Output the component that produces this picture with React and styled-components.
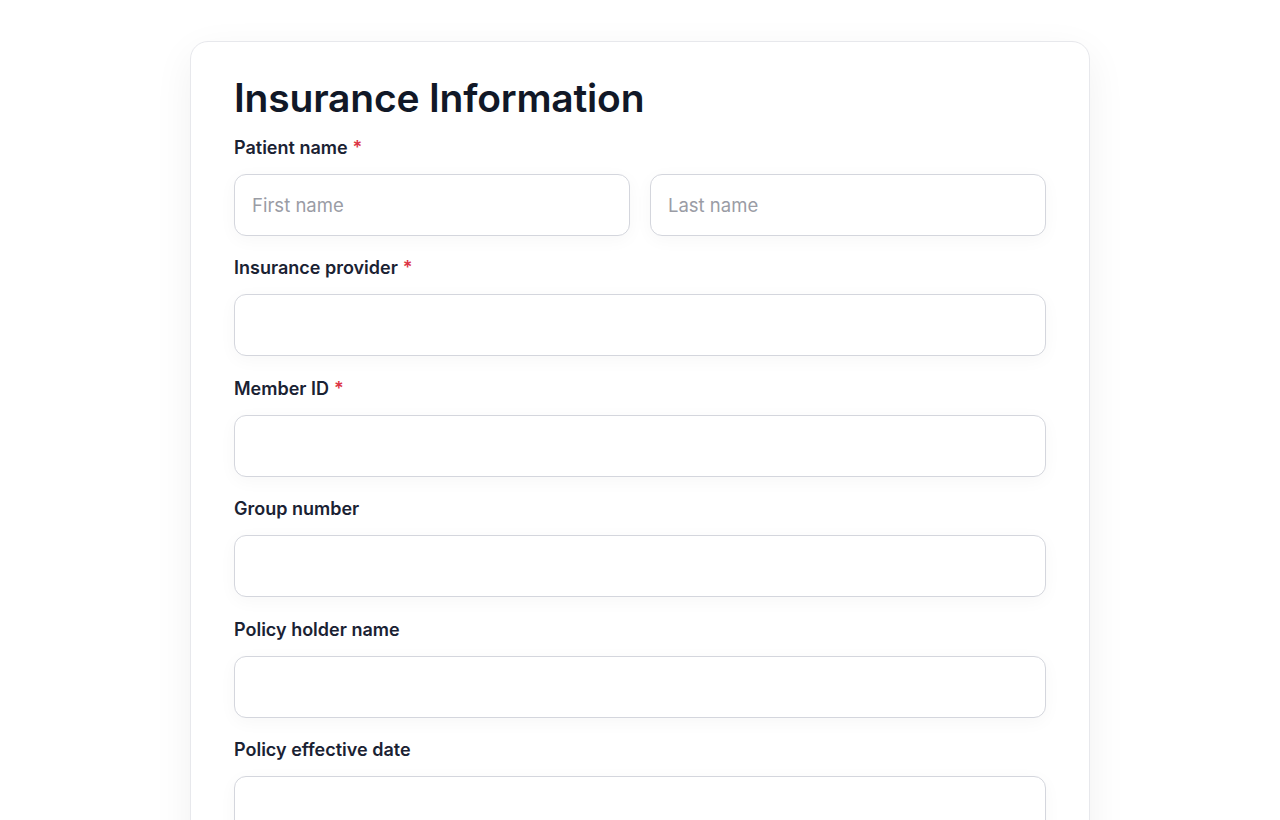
import React from 'react';
import styled, { createGlobalStyle } from 'styled-components';

const GlobalStyle = createGlobalStyle`
  * { box-sizing: border-box; }
  body {
    margin: 0;
    background: #ffffff;
    font-family: 'Inter', 'Noto Sans', sans-serif;
    color: #111827;
  }
`;

const Page = styled.div`
  min-height: 100vh;
  display: flex;
  justify-content: center;
  padding-top: 41px;
`;

const Card = styled.form`
  width: 900px;
  align-self: flex-start;
  background: #fff;
  border: 1px solid #e7e8ec;
  border-radius: 18px;
  padding: 33px 43px 40px;
  box-shadow: 0 12px 40px rgba(17, 24, 39, 0.06);
`;

const Title = styled.h1`
  margin: 0 0 16px;
  font-size: 39px;
  line-height: 46px;
  font-weight: 600;
  letter-spacing: -0.2px;
  color: #111827;
`;

const Field = styled.div`
  display: flex;
  flex-direction: column;
  gap: 16px;
  margin-bottom: 21.4px;
`;

const Label = styled.label`
  font-size: 18px;
  line-height: 21px;
  font-weight: 600;
  color: #1a2233;
`;

const Required = styled.span`
  color: #dc3545;
  margin-left: 5px;
`;

const Row = styled.div`
  display: grid;
  grid-template-columns: ${(p) => `repeat(${p.cols || 1}, 1fr)`};
  gap: 20px;
`;

const Input = styled.input`
  width: 100%;
  height: 62px;
  padding: 0 17px;
  border: 1px solid #d4d6dd;
  border-radius: 12px;
  background: #fff;
  font-family: inherit;
  font-size: 18.5px;
  color: #111827;
  box-shadow: 0 4px 18px rgba(17, 24, 39, 0.035);
  outline: none;

  &::placeholder {
    color: #9a9ca5;
  }
`;

const fields = [
  { label: 'Insurance provider', required: true },
  { label: 'Member ID', required: true },
  { label: 'Group number' },
  { label: 'Policy holder name' },
  { label: 'Policy effective date' },
];

const App = () => (
  <>
    <GlobalStyle />
    <Page>
      <Card>
        <Title>Insurance Information</Title>
        <Field>
          <Label>
            Patient name<Required>*</Required>
          </Label>
          <Row cols={2}>
            <Input placeholder="First name" />
            <Input placeholder="Last name" />
          </Row>
        </Field>
        {fields.map((f) => (
          <Field key={f.label}>
            <Label>
              {f.label}
              {f.required && <Required>*</Required>}
            </Label>
            <Input />
          </Field>
        ))}
      </Card>
    </Page>
  </>
);

export default App;
